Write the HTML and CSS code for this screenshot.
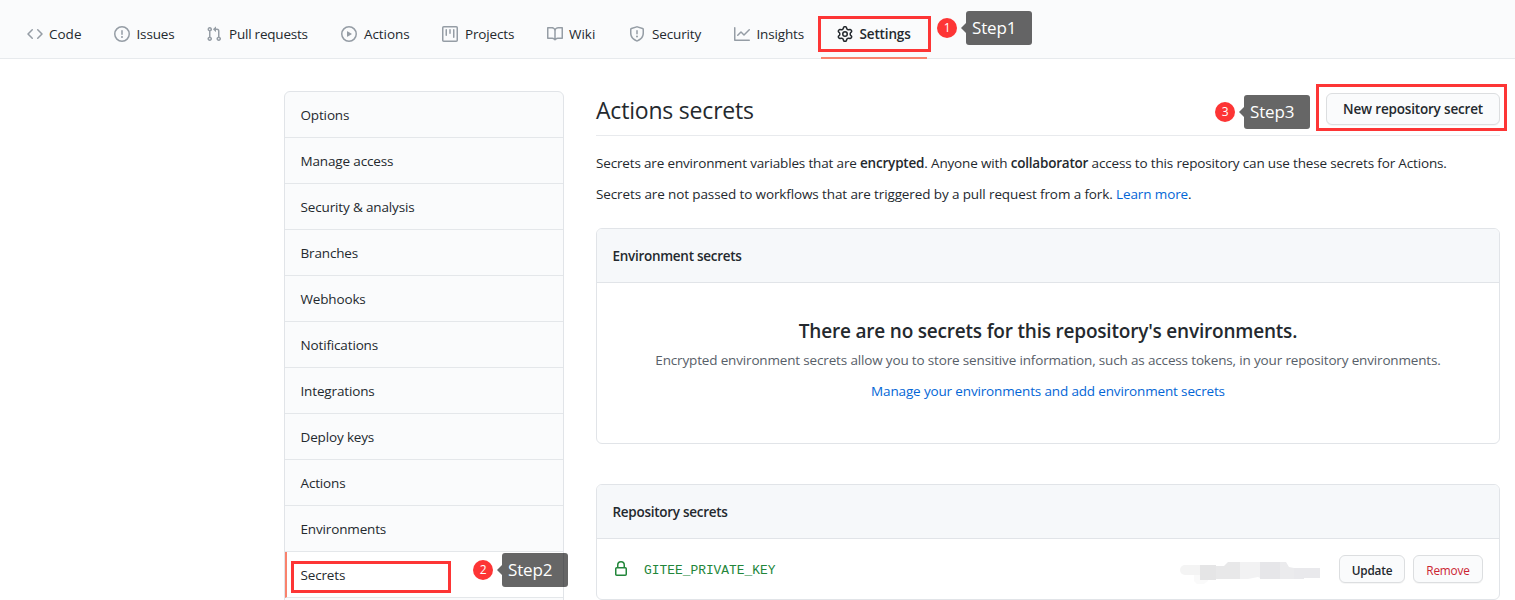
FILE: index.html
```html
<!DOCTYPE html>
<html lang="en">
<head>
<meta charset="utf-8">
<title>Actions secrets</title>
<link rel="stylesheet" href="styles.css">
</head>
<body>
<nav class="nav">
  <a class="tab code"><svg class="icon" viewBox="0 0 16 16"><path d="M4.72 3.22a.75.75 0 011.06 1.06L2.06 8l3.72 3.72a.75.75 0 11-1.06 1.06L.47 8.53a.75.75 0 010-1.06l4.25-4.25zm6.56 0a.75.75 0 10-1.06 1.06L13.94 8l-3.72 3.72a.75.75 0 101.06 1.06l4.25-4.25a.75.75 0 000-1.06l-4.25-4.25z"/></svg><span>Code</span></a>
  <a class="tab issues"><svg class="icon" viewBox="0 0 16 16"><path fill-rule="evenodd" d="M8 1.5a6.5 6.5 0 100 13 6.5 6.5 0 000-13zM0 8a8 8 0 1116 0A8 8 0 010 8zm9 3a1 1 0 11-2 0 1 1 0 012 0zm-.25-6.25a.75.75 0 00-1.5 0v3.5a.75.75 0 001.5 0v-3.5z"/></svg><span>Issues</span></a>
  <a class="tab pulls"><svg class="icon" viewBox="0 0 16 16"><path fill-rule="evenodd" d="M7.177 3.073L9.573.677A.25.25 0 0110 .854v4.792a.25.25 0 01-.427.177L7.177 3.427a.25.25 0 010-.354zM3.75 2.5a.75.75 0 100 1.5.75.75 0 000-1.5zm-2.25.75a2.25 2.25 0 113 2.122v5.256a2.251 2.251 0 11-1.5 0V5.372A2.25 2.25 0 011.5 3.25zM11 2.5h-1V4h1a1 1 0 011 1v5.628a2.251 2.251 0 101.5 0V5A2.5 2.5 0 0011 2.5zm1 10.25a.75.75 0 111.5 0 .75.75 0 01-1.5 0zM3.75 12a.75.75 0 100 1.5.75.75 0 000-1.5z"/></svg><span>Pull requests</span></a>
  <a class="tab actions"><svg class="icon" viewBox="0 0 16 16"><path fill-rule="evenodd" d="M1.5 8a6.5 6.5 0 1113 0 6.5 6.5 0 01-13 0zM8 0a8 8 0 100 16A8 8 0 008 0zM6.379 5.227A.25.25 0 006 5.442v5.117a.25.25 0 00.379.214l4.264-2.559a.25.25 0 000-.428L6.379 5.227z"/></svg><span>Actions</span></a>
  <a class="tab projects"><svg class="icon" viewBox="0 0 16 16"><path fill-rule="evenodd" d="M1.75 0A1.75 1.75 0 000 1.75v12.5C0 15.216.784 16 1.75 16h12.5A1.75 1.75 0 0016 14.25V1.75A1.75 1.75 0 0014.25 0H1.75zM1.5 1.75a.25.25 0 01.25-.25h12.5a.25.25 0 01.25.25v12.5a.25.25 0 01-.25.25H1.75a.25.25 0 01-.25-.25V1.75zM11.75 3a.75.75 0 00-.75.75v7.5a.75.75 0 001.5 0v-7.5a.75.75 0 00-.75-.75zm-8.25.75a.75.75 0 011.5 0v5.5a.75.75 0 01-1.5 0v-5.5zM8 3a.75.75 0 00-.75.75v3.5a.75.75 0 001.5 0v-3.5A.75.75 0 008 3z"/></svg><span>Projects</span></a>
  <a class="tab wiki"><svg class="icon" viewBox="0 0 16 16"><path fill-rule="evenodd" d="M0 1.75A.75.75 0 01.75 1h4.253c1.227 0 2.317.59 3 1.501A3.744 3.744 0 0111.006 1h4.245a.75.75 0 01.75.75v10.5a.75.75 0 01-.75.75h-4.507a2.25 2.25 0 00-1.591.659l-.622.621a.75.75 0 01-1.06 0l-.622-.621A2.25 2.25 0 005.258 13H.75a.75.75 0 01-.75-.75V1.75zm8.755 3a2.25 2.25 0 012.25-2.25H14.5v9h-3.757c-.71 0-1.4.201-1.992.572l.004-7.322zm-1.504 7.324l.004-5.073-.002-2.253A2.25 2.25 0 005.003 2.5H1.5v9h3.757a3.75 3.75 0 011.994.574z"/></svg><span>Wiki</span></a>
  <a class="tab security"><svg class="icon" viewBox="0 0 16 16"><path fill-rule="evenodd" d="M7.467.133a1.75 1.75 0 011.066 0l5.25 1.68A1.75 1.75 0 0115 3.48V7c0 1.566-.32 3.182-1.303 4.682-.983 1.498-2.585 2.813-5.032 3.855a1.7 1.7 0 01-1.33 0c-2.447-1.042-4.049-2.357-5.032-3.855C1.32 10.182 1 8.566 1 7V3.48a1.75 1.75 0 011.217-1.667l5.25-1.68zm.61 1.429a.25.25 0 00-.153 0l-5.25 1.68a.25.25 0 00-.174.238V7c0 1.358.275 2.666 1.057 3.86.784 1.194 2.121 2.34 4.366 3.297a.2.2 0 00.154 0c2.245-.956 3.582-2.104 4.366-3.298C13.225 9.666 13.5 8.36 13.5 7V3.48a.25.25 0 00-.174-.237l-5.25-1.68zM9 10.5a1 1 0 11-2 0 1 1 0 012 0zm-.25-5.75a.75.75 0 10-1.5 0v3a.75.75 0 001.5 0v-3z"/></svg><span>Security</span></a>
  <a class="tab insights"><svg class="icon" viewBox="0 0 16 16"><path fill-rule="evenodd" d="M1.5 1.75a.75.75 0 00-1.5 0v12.5c0 .414.336.75.75.75h14.5a.75.75 0 000-1.5H1.5V1.75zm14.28 2.53a.75.75 0 00-1.06-1.06L10 7.94 7.53 5.47a.75.75 0 00-1.06 0L3.22 8.72a.75.75 0 001.06 1.06L7 7.06l2.47 2.47a.75.75 0 001.06 0l5.25-5.25z"/></svg><span>Insights</span></a>
  <a class="tab settings"><svg class="icon" viewBox="0 0 16 16"><path fill-rule="evenodd" d="M7.429 1.525a6.593 6.593 0 011.142 0c.036.003.108.036.137.146l.289 1.105c.147.56.55.967.997 1.189.174.086.341.183.501.29.417.278.97.423 1.53.27l1.102-.303c.11-.03.175.016.195.046.219.31.41.641.573.989.014.031.022.11-.059.19l-.815.806c-.411.406-.562.957-.53 1.456a4.588 4.588 0 010 .582c-.032.499.119 1.05.53 1.456l.815.806c.08.08.073.159.059.19a6.494 6.494 0 01-.573.99c-.02.029-.086.074-.195.045l-1.103-.303c-.559-.153-1.112-.008-1.529.27-.16.107-.327.204-.5.29-.449.222-.851.628-.998 1.189l-.289 1.105c-.029.11-.101.143-.137.146a6.613 6.613 0 01-1.142 0c-.036-.003-.108-.037-.137-.146l-.289-1.105c-.147-.56-.55-.967-.997-1.189a4.502 4.502 0 01-.501-.29c-.417-.278-.97-.423-1.53-.27l-1.102.303c-.11.03-.175-.016-.195-.046a6.492 6.492 0 01-.573-.989c-.014-.031-.022-.11.059-.19l.815-.806c.411-.406.562-.957.53-1.456a4.587 4.587 0 010-.582c.032-.499-.119-1.05-.53-1.456l-.815-.806c-.08-.08-.073-.159-.059-.19a6.44 6.44 0 01.573-.99c.02-.029.086-.075.195-.045l1.103.303c.559.153 1.112.008 1.529-.27.16-.107.327-.204.5-.29.449-.222.851-.628.998-1.189l.289-1.105c.029-.11.101-.143.137-.146zM8 0c-.236 0-.47.01-.701.03-.743.065-1.29.615-1.458 1.261l-.29 1.106c-.017.066-.078.158-.211.224a5.994 5.994 0 00-.668.386c-.123.082-.233.09-.3.071L3.27 2.776c-.644-.177-1.392.02-1.82.63a7.977 7.977 0 00-.704 1.217c-.315.675-.111 1.422.363 1.891l.815.806c.05.048.098.147.088.294a6.084 6.084 0 000 .772c.01.147-.038.246-.088.294l-.815.806c-.474.469-.678 1.216-.363 1.891.2.428.436.835.704 1.218.428.609 1.176.806 1.82.63l1.103-.303c.066-.019.176-.011.299.071.213.143.436.272.668.386.133.066.194.158.212.224l.289 1.106c.169.646.715 1.196 1.458 1.26a8.094 8.094 0 001.402 0c.743-.064 1.29-.614 1.458-1.26l.29-1.106c.017-.066.078-.158.211-.224a5.98 5.98 0 00.668-.386c.123-.082.233-.09.3-.071l1.102.302c.644.177 1.392-.02 1.82-.63.268-.382.505-.789.704-1.217.315-.675.111-1.422-.364-1.891l-.814-.806c-.05-.048-.098-.147-.088-.294a6.1 6.1 0 000-.772c-.01-.147.039-.246.088-.294l.814-.806c.475-.469.679-1.216.364-1.891a7.992 7.992 0 00-.704-1.218c-.428-.609-1.176-.806-1.82-.63l-1.103.303c-.066.019-.176.011-.299-.071a5.991 5.991 0 00-.668-.386c-.133-.066-.194-.158-.212-.224L10.16 1.29C9.99.645 9.444.095 8.701.031A8.094 8.094 0 008 0zm1.5 8a1.5 1.5 0 11-3 0 1.5 1.5 0 013 0zM11 8a3 3 0 11-6 0 3 3 0 016 0z"/></svg><span>Settings</span></a>
</nav>
<div class="page">
  <aside class="menu">
    <a class="menu-item">Options</a>
    <a class="menu-item">Manage access</a>
    <a class="menu-item">Security &amp; analysis</a>
    <a class="menu-item">Branches</a>
    <a class="menu-item">Webhooks</a>
    <a class="menu-item">Notifications</a>
    <a class="menu-item">Integrations</a>
    <a class="menu-item">Deploy keys</a>
    <a class="menu-item">Actions</a>
    <a class="menu-item">Environments</a>
    <a class="menu-item selected">Secrets</a>
    <a class="menu-item"></a>
  </aside>
  <main class="main">
    <header class="subhead">
      <h2 class="title"><span>Actions secrets</span></h2>
      <button class="btn btn-new"><span>New repository secret</span></button>
    </header>
    <p class="para p1">Secrets are environment variables that are <strong>encrypted</strong>. Anyone with <strong>collaborator</strong> access to this repository can use these secrets for Actions.</p>
    <p class="para p2">Secrets are not passed to workflows that are triggered by a pull request from a fork. <a class="link">Learn more</a>.</p>
    <section class="box env">
      <div class="box-head">Environment secrets</div>
      <div class="blank">
        <h3 class="blank-title">There are no secrets for this repository's environments.</h3>
        <p class="blank-text">Encrypted environment secrets allow you to store sensitive information, such as access tokens, in your repository environments.</p>
        <a class="link blank-link">Manage your environments and add environment secrets</a>
      </div>
    </section>
    <section class="box repo">
      <div class="box-head">Repository secrets</div>
      <div class="row">
        <svg class="icon lock" viewBox="0 0 16 16"><path fill-rule="evenodd" d="M4 4v2h-.25A1.75 1.75 0 002 7.75v5.5c0 .966.784 1.75 1.75 1.75h8.5A1.75 1.75 0 0014 13.25v-5.5A1.75 1.75 0 0012.25 6H12V4a4 4 0 10-8 0zm6.5 2V4a2.5 2.5 0 10-5 0v2h5zM12 7.5h.25a.25.25 0 01.25.25v5.5a.25.25 0 01-.25.25h-8.5a.25.25 0 01-.25-.25v-5.5a.25.25 0 01.25-.25H12z"/></svg>
        <code class="key">GITEE_PRIVATE_KEY</code>
        <svg class="mosaic" viewBox="0 0 142 24">
          <path fill="#f4f4f4" d="M5 4H20V14H5A5 5 0 015 4z"/>
          <path fill="#fafafa" d="M14 14H28V20L24 23H17L14 20z"/>
          <path fill="#e5e5e6" d="M20 4H36V19H20z"/>
          <path fill="#e8e8e9" d="M36 5H44L48 1H60V18H36z"/>
          <path fill="#f2f2f3" d="M60 1H80V17L78 16L68 18H60z"/>
          <path fill="#e6e6e9" d="M80 1H100V18H80z"/>
          <path fill="#ebebed" d="M100 1H106L109 6L114 7V18H100z"/>
          <path fill="#e9e9ec" d="M114 7H140V17H124V18H114z"/>
        </svg>
        <button class="btn btn-sm update"><span>Update</span></button>
        <button class="btn btn-sm remove"><span>Remove</span></button>
      </div>
    </section>
  </main>
</div>

<div class="frame frame1"></div>
<div class="frame frame2"></div>
<div class="frame frame3"></div>
<div class="step step1"><b class="num">1</b><span class="tip">Step1</span></div>
<div class="step step2"><b class="num">2</b><span class="tip">Step2</span></div>
<div class="step step3"><b class="num">3</b><span class="tip">Step3</span></div>
</body>
</html>
```
FILE: styles.css
```css
* { box-sizing: border-box; }
body {
  position: relative;
  margin: 0;
  height: 600px;
  overflow: hidden;
  background: #fff;
  color: #24292e;
  font: 13.5px/21px "Open Sans", "Noto Sans", sans-serif;
  letter-spacing: -.15px;
}
h2, h3, p { margin: 0; }
.icon { width: 16px; height: 16px; flex: none; fill: currentColor; }

.nav {
  display: flex;
  height: 59px;
  padding-left: 11px;
  background: #fafbfc;
  border-bottom: 1px solid #e7eaed;
}
.tab {
  display: flex;
  flex: none;
  height: 59px;
  padding: 10px 0 0 16px;
  align-items: center;
  gap: 6px;
  white-space: nowrap;
  border-bottom: 2px solid transparent;
}
.tab .icon { color: #959da5; }
.tab span { padding-top: 2px; }
.code { width: 87px; letter-spacing: 0; }
.issues { width: 92px; }
.issues span, .insights span { margin-left: .5px; }
.pulls { width: 135px; letter-spacing: -.22px; }
.pulls span, .actions span, .projects span, .security span { margin-left: 1px; }
.actions { width: 101px; letter-spacing: -.08px; }
.projects { width: 105px; }
.wiki { width: 82px; letter-spacing: 0; }
.security { width: 105px; }
.insights { width: 103px; }
.settings { width: 106px; border-color: #f9826c; font-weight: 600; }
.settings span { margin-left: .5px; }
.settings .icon { color: #24292e; }

.page { display: flex; gap: 32px; padding: 32px 15px 0 284px; }
.menu {
  width: 280px;
  height: 530px;
  flex: none;
  overflow: hidden;
  background: #fafbfc;
  border: 1px solid #e1e4e8;
  border-radius: 6px;
}
.menu-item {
  display: flex;
  height: 46px;
  padding: 2px 0 0 15.5px;
  align-items: center;
  border-bottom: 1px solid #e4e7ea;
}
.selected { padding-left: 13.5px; background: #fff; border-left: 2px solid #f9826c; }

.main { flex: none; width: 904px; }
.subhead {
  display: flex;
  height: 45px;
  padding-top: 2px;
  justify-content: space-between;
  align-items: flex-start;
  border-bottom: 1px solid #e8eaed;
}
.title { font-size: 23px; line-height: 34px; font-weight: 400; letter-spacing: -.2px; }
.btn {
  padding: 0;
  font: 600 13.5px/20px "Open Sans", "Noto Sans", sans-serif;
  letter-spacing: -.18px;
  color: #24292e;
  background: #fafbfc;
  border: 1px solid #dcdee0;
  border-radius: 6px;
  box-shadow: 0 1px 0 rgba(27, 31, 35, .04);
}
.btn-new { width: 174px; height: 32px; }
.para { white-space: nowrap; }
.p1 { margin-top: 17px; letter-spacing: -.16px; }
.p2 { margin-top: 10px; letter-spacing: -.115px; }
.para strong { font-weight: 600; letter-spacing: -.2px; }
.link { color: #0366d6; }
.box { border: 1px solid #e1e4e8; border-radius: 6px; overflow: hidden; }
.box-head {
  height: 54px;
  padding: 17px 15.5px;
  font-weight: 600;
  letter-spacing: -.28px;
  background: #f6f8fa;
  border-bottom: 1px solid #e1e4e8;
}
.env { height: 216px; margin-top: 23px; }
.blank {
  display: flex;
  flex-direction: column;
  padding-top: 33px;
  align-items: center;
  white-space: nowrap;
}
.blank-title { font-size: 19px; line-height: 30px; font-weight: 600; letter-spacing: -.2px; }
.blank-text { margin-top: 4px; color: #586069; letter-spacing: -.16px; }
.blank-link { margin-top: 10px; }
.repo { height: 116px; margin-top: 40px; }
.row { display: flex; height: 60px; padding: 0 16px; align-items: center; }
.lock { color: #22863a; }
.key {
  margin: 3px 0 0 15px;
  color: #22863a;
  font: 12.9px/20px "Liberation Mono", monospace;
  letter-spacing: 0;
}
.mosaic { width: 142px; height: 24px; margin: 8px 17px 0 auto; }
.btn-sm { height: 28px; font-size: 11.8px; padding-top: 1px; }
.update { width: 66px; margin-right: 8px; }
.remove { width: 70px; color: #cb2431; font-weight: 500; }

.frame { position: absolute; border: 3px solid #fd3535; }
.frame1 { left: 818px; top: 16px; width: 113px; height: 36px; }
.frame2 { left: 291px; top: 561px; width: 160px; height: 32px; }
.frame3 { left: 1316px; top: 84px; width: 191px; height: 47px; }
.step { position: absolute; display: flex; align-items: center; gap: 9px; height: 34px; }
.step1 { left: 937px; top: 11px; }
.step2 { left: 473px; top: 553px; }
.step3 { left: 1215px; top: 95px; }
.num {
  width: 20px;
  height: 20px;
  border-radius: 50%;
  background: #fd3535;
  color: #fff;
  font-size: 12px;
  font-weight: 400;
  line-height: 20px;
  text-align: center;
}
.tip {
  position: relative;
  width: 66px;
  height: 34px;
  padding-left: 6px;
  border-radius: 3px;
  background: rgba(0, 0, 0, .6);
  color: #fff;
  font-size: 17px;
  line-height: 34px;
}
.tip::before {
  content: "";
  position: absolute;
  left: -5px;
  top: 12px;
  border: 5px solid transparent;
  border-left: 0;
  border-right-color: rgba(0, 0, 0, .6);
}
```
